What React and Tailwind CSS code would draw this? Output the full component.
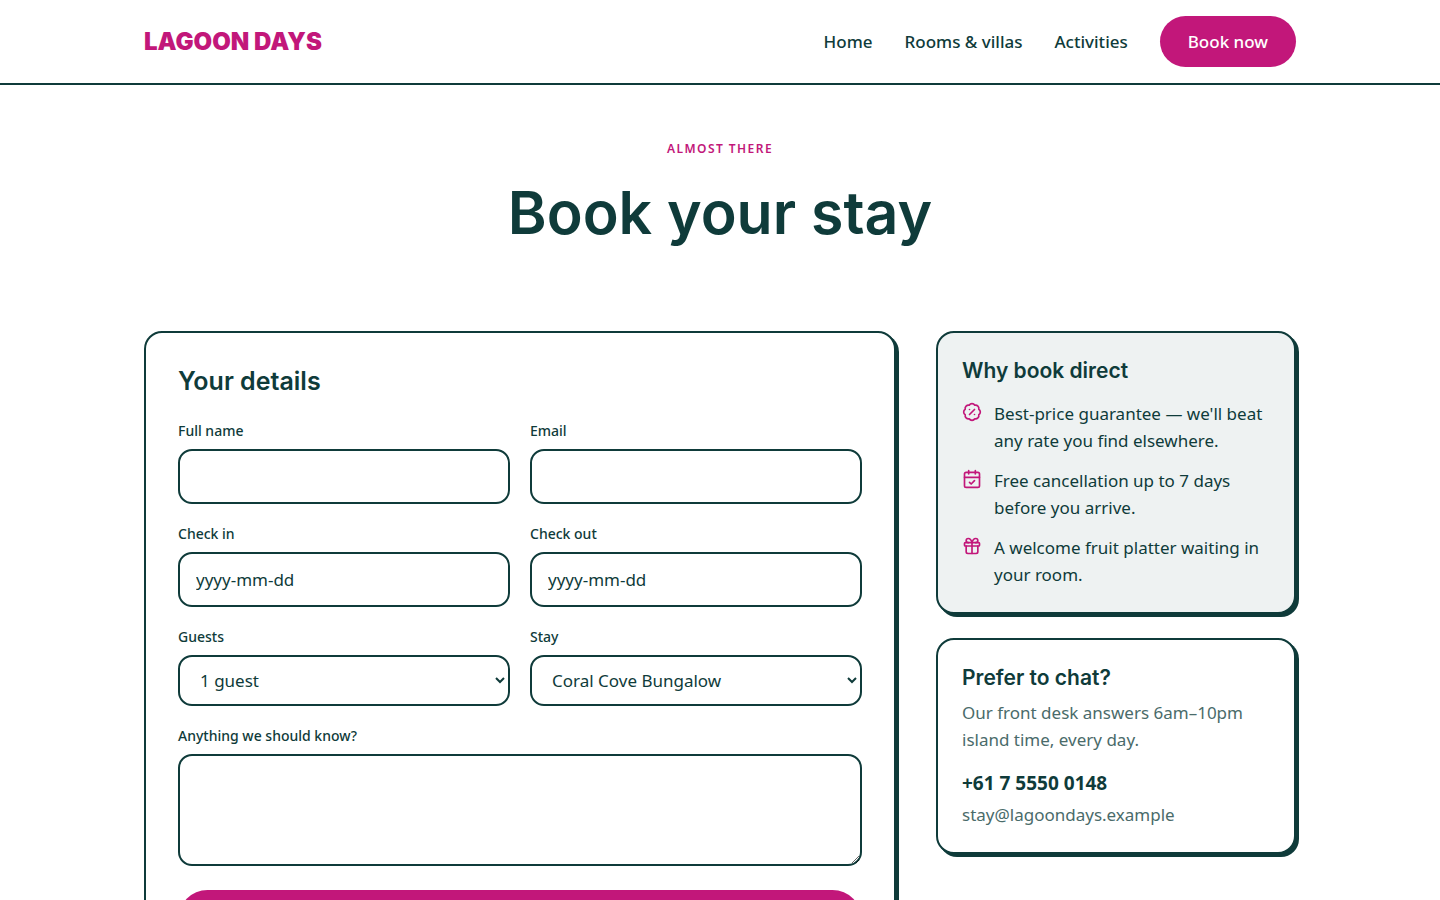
import { BadgePercent, CalendarCheck, Gift } from 'lucide-react';

const navLinks = ['Home', 'Rooms & villas', 'Activities'];

const perks = [
  { icon: BadgePercent, text: "Best-price guarantee — we'll beat any rate you find elsewhere." },
  { icon: CalendarCheck, text: 'Free cancellation up to 7 days before you arrive.' },
  { icon: Gift, text: 'A welcome fruit platter waiting in your room.' },
];

const guestOptions = ['1 guest', '2 guests', '3 guests', '4 guests'];
const stayOptions = ['Coral Cove Bungalow'];

const control = 'w-full rounded-[14px] border-2 border-[#0f3b3a] bg-white text-[17px] leading-[27px]';
const card = 'rounded-[18px] border-2 border-[#0f3b3a] shadow-[3px_3px_0_#0f3b3a]';
const heading = "font-['Inter',sans-serif] font-semibold";

function Field({ id, label, children }) {
  return (
    <div className="flex flex-col gap-2">
      <label htmlFor={id} className="text-sm leading-5 font-medium">
        {label}
      </label>
      {children}
    </div>
  );
}

function TextField({ id, label, type = 'text', placeholder }) {
  return (
    <Field id={id} label={label}>
      <input
        id={id}
        type={type}
        placeholder={placeholder}
        className={`${control} px-4 py-3 placeholder:text-[#0f3b3a]`}
      />
    </Field>
  );
}

function SelectField({ id, label, options }) {
  return (
    <Field id={id} label={label}>
      <select id={id} className={`${control} h-[51px] px-4`}>
        {options.map((o) => (
          <option key={o}>{o}</option>
        ))}
      </select>
    </Field>
  );
}

export default function App() {
  return (
    <div className="min-h-screen bg-white font-['Noto_Sans',sans-serif] text-[17px] leading-[27px] text-[#0f3b3a]">
      <header className="border-b-2 border-[#0f3b3a]">
        <div className="mx-auto flex max-w-6xl items-center justify-between py-4">
          <a href="#" className="font-['Inter',sans-serif] text-2xl font-black text-[#c2177a]">
            LAGOON DAYS
          </a>
          <nav className="flex items-center gap-8 font-medium">
            {navLinks.map((l) => (
              <a key={l} href="#">{l}</a>
            ))}
            <a href="#" className="rounded-full bg-[#c2177a] px-7 py-3 text-white">Book now</a>
          </nav>
        </div>
      </header>

      <main className="mx-auto max-w-6xl pb-20">
        <div className="pt-[54px] pb-20 text-center">
          <p className="mb-4 text-xs leading-5 font-semibold tracking-[0.12em] text-[#c2177a]">ALMOST THERE</p>
          <h1 className={`${heading} text-[59px] leading-[76px]`}>Book your stay</h1>
        </div>

        <div className="grid grid-cols-[1fr_360px] items-start gap-10">
          <form className={`${card} bg-white p-8`}>
            <h2 className={`${heading} mb-6 text-[25px] leading-8`}>Your details</h2>
            <div className="grid grid-cols-2 gap-5">
              <TextField id="name" label="Full name" />
              <TextField id="email" label="Email" type="email" />
              <TextField id="check-in" label="Check in" placeholder="yyyy-mm-dd" />
              <TextField id="check-out" label="Check out" placeholder="yyyy-mm-dd" />
              <SelectField id="guests" label="Guests" options={guestOptions} />
              <SelectField id="stay" label="Stay" options={stayOptions} />
              <div className="col-span-2">
                <Field id="notes" label="Anything we should know?">
                  <textarea id="notes" className={`${control} h-28 resize-y px-4 py-3`} />
                </Field>
              </div>
            </div>
            <button
              type="submit"
              className="mt-6 w-full rounded-full bg-[#c2177a] px-7 py-4 font-medium text-white"
            >
              Book now
            </button>
          </form>

          <aside className="flex flex-col gap-6">
            <section className={`${card} bg-[#eef2f2] p-6`}>
              <h3 className={`${heading} mb-4 text-[21px] leading-[27px]`}>Why book direct</h3>
              <ul className="flex flex-col gap-[13px]">
                {perks.map(({ icon: Icon, text }) => (
                  <li key={text} className="flex gap-3">
                    <Icon className="mt-0.5 size-5 shrink-0 text-[#c2177a]" />
                    <span>{text}</span>
                  </li>
                ))}
              </ul>
            </section>

            <section className={`${card} bg-white p-6`}>
              <h3 className={`${heading} mb-2 text-[21px] leading-[27px]`}>Prefer to chat?</h3>
              <p className="text-[#4a6b6a]">Our front desk answers 6am–10pm island time, every day.</p>
              <a href="tel:+61755500148" className="mt-4 block text-[19px] leading-7 font-bold">+61 7 5550 0148</a>
              <a href="mailto:stay@lagoondays.example" className="mt-1 block text-[#4a6b6a]">
                stay@lagoondays.example
              </a>
            </section>
          </aside>
        </div>
      </main>
    </div>
  );
}
